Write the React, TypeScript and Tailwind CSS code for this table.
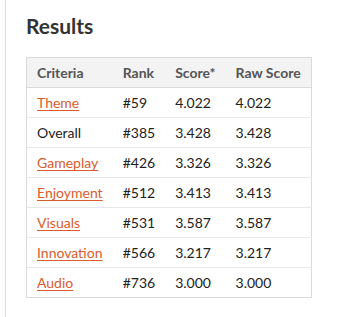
import React from "react";

const rows: { name: string; link: boolean; rank: string; score: string; raw: string }[] = [
  { name: "Theme", link: true, rank: "#59", score: "4.022", raw: "4.022" },
  { name: "Overall", link: false, rank: "#385", score: "3.428", raw: "3.428" },
  { name: "Gameplay", link: true, rank: "#426", score: "3.326", raw: "3.326" },
  { name: "Enjoyment", link: true, rank: "#512", score: "3.413", raw: "3.413" },
  { name: "Visuals", link: true, rank: "#531", score: "3.587", raw: "3.587" },
  { name: "Innovation", link: true, rank: "#566", score: "3.217", raw: "3.217" },
  { name: "Audio", link: true, rank: "#736", score: "3.000", raw: "3.000" },
];

export default function App() {
  return (
    <div className="bg-white min-h-[317px] w-[337px] overflow-hidden" style={{ fontFamily: "Lato, 'Liberation Sans', sans-serif" }}>
      <div className="ml-[5px] border-l border-[#dedede] min-h-[317px] pl-5 pt-[13px]">
        <h2 className="text-[21px] font-bold leading-[1.2] text-[#333]">Results</h2>
        <table className="mt-[19px] border-collapse border border-[#dadada] text-[14px]">
          <thead>
            <tr className="bg-[#f3f3f3] border-b border-[#dadada]">
              <th className="h-[30px] px-[10px] py-0 text-left font-bold text-[#555]">Criteria</th>
              <th className="h-[30px] px-[10px] py-0 text-left font-bold text-[#555]">Rank</th>
              <th className="h-[30px] px-[10px] py-0 text-left font-bold text-[#555]">Score*</th>
              <th className="h-[30px] px-[10px] py-0 text-left font-bold text-[#555]">Raw Score</th>
            </tr>
          </thead>
          <tbody>
            {rows.map((r, i) => (
              <tr key={r.name} className={i < rows.length - 1 ? "border-b border-[#e8e8e8]" : ""}>
                <td className="h-[30px] px-[10px] py-0 text-[#222]">
                  {r.link ? (
                    <a className="text-[#da5b2c] underline underline-offset-[2px]" href="#">{r.name}</a>
                  ) : (
                    r.name
                  )}
                </td>
                <td className="h-[30px] px-[10px] py-0 text-[#222]">{r.rank}</td>
                <td className="h-[30px] px-[10px] py-0 text-[#222]">{r.score}</td>
                <td className="h-[30px] px-[10px] py-0 text-[#222]">{r.raw}</td>
              </tr>
            ))}
          </tbody>
        </table>
      </div>
    </div>
  );
}
